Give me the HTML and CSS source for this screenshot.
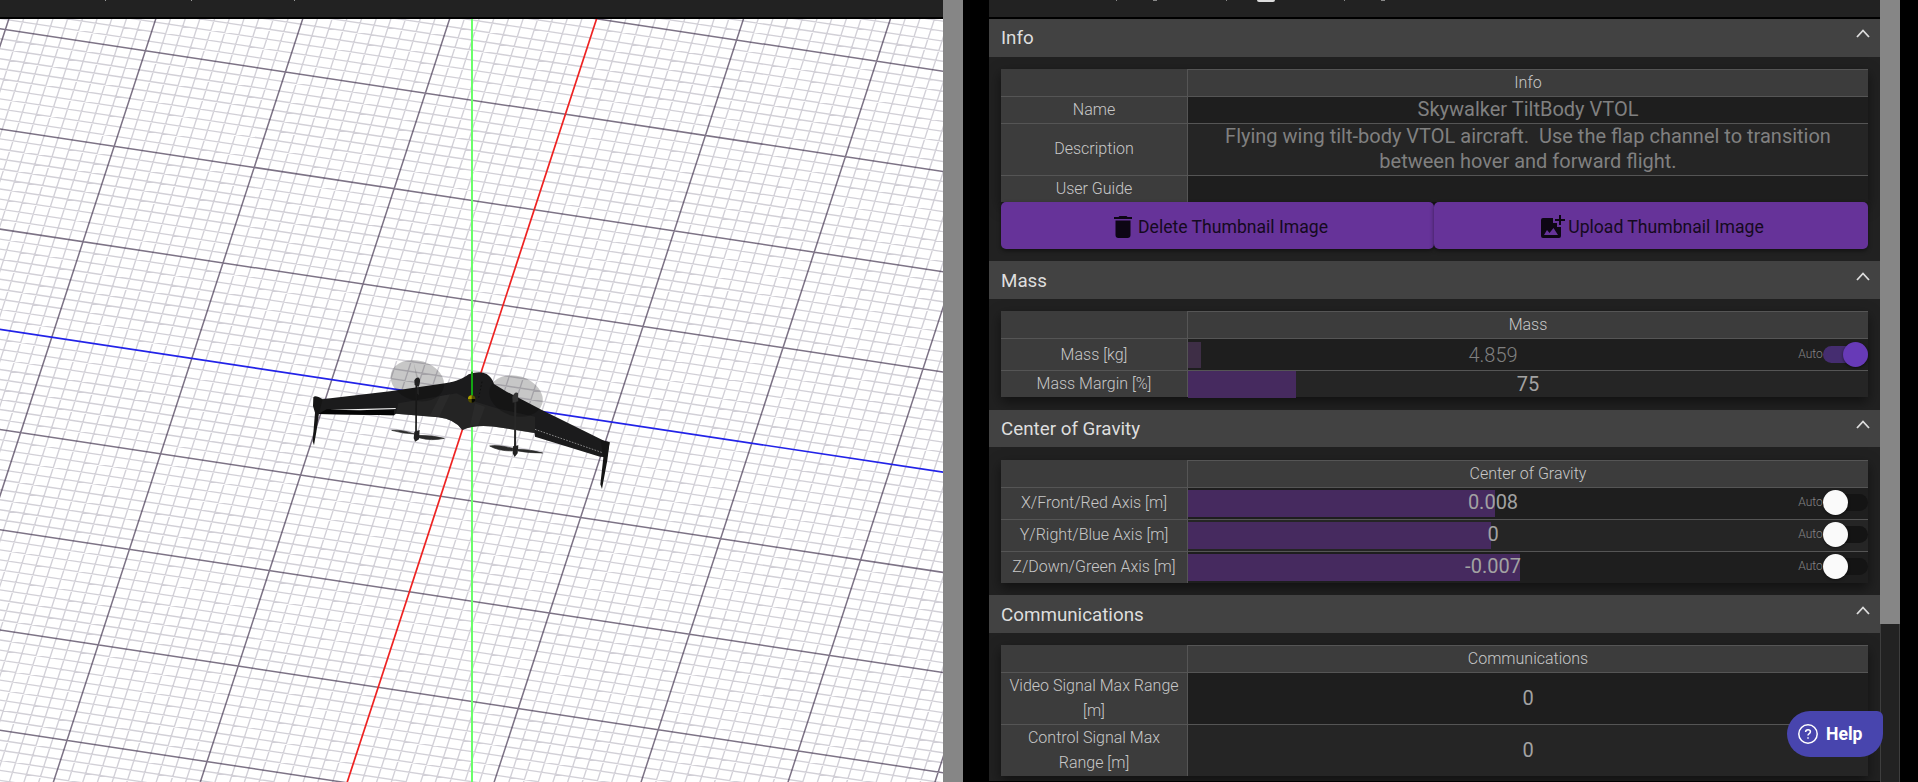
FILE: index.html
```html
<!DOCTYPE html>
<html lang="en">
<head>
<meta charset="utf-8">
<title>Vehicle Wizard</title>
<link rel="stylesheet" href="styles.css">
</head>
<body>
<main class="app">
  <section class="viewer">
    <div class="toolbar">
      <svg class="toolbar-edge" width="943" height="3"><path d="M105 0h1v1h-1zM191 0h1v1h-1zM294 0h1v1h-1z" fill="#999"/></svg>
    </div>
    <svg class="scene" width="943" height="763" viewBox="0 19 943 763">
      <rect y="19" width="943" height="763" fill="#fff"/>
      <path id="minor" class="grid-minor"/>
      <path id="major" class="grid-major"/>
      <path d="M-88.200 316L1031.800 485.600" stroke="#2222e8" stroke-width="1.700"/>
      <path d="M596.600 18.800L347 782.800" stroke="#ee2222" stroke-width="1.700"/>
      <path d="M472 18V783" stroke="#6bff6b" stroke-width="2"/>
      <g transform="translate(290 340) scale(.33333)">
        <path d="M83 179L300 154L465 130C500 125 520 115 536 103Q570 91 590 102Q606 112 612 132L650 155L760 212L942 302L959 307L951 352L930 350L735 290L734 279L640 264Q560 250 517 270Q495 238 445 232L318 221L312 226L85 222L75 200Z" fill="#1b1b1c"/>
        <path d="M325 190L500 160L540 180L620 205L735 230L735 280L640 264Q560 250 517 270Q495 238 445 232L318 221Z" fill="#2c2c2c" opacity=".55"/>
        <path d="M450 168L480 163L447 232L420 226ZM555 190L585 200L565 255L540 258Z" fill="#383838" opacity=".3"/>
        <path d="M85 222L110 208L312 211V226Z" fill="#050505"/>
        <path d="M120 209L317 204V207L210 211Z" fill="#f2f2f2"/>
        <path d="M735 268L940 339" stroke="#bbb" stroke-width="2" stroke-dasharray="5 4"/>
        <ellipse cx="382" cy="122" rx="82" ry="60" transform="rotate(17 382 122)" fill="#000" opacity=".22"/>
        <ellipse cx="678" cy="168" rx="82" ry="60" transform="rotate(17 678 168)" fill="#000" opacity=".22"/>
        <path d="M371 68L384 112L387 165L379 160L380 120Z" fill="#555" opacity=".25"/>
        <path d="M379 135L378 285" stroke="#171717" stroke-width="5"/>
        <path d="M676 180L675 330" stroke="#282828" stroke-width="6"/>
        <path d="M373 121Q378 110 387 113Q394 121 386 140L374 135Z" fill="#222"/>
        <path d="M667 171Q674 153 684 159L685 184L668 188Z" fill="#343434"/>
        <path d="M305 271Q335 268 374 282Q338 281 305 271ZM385 286Q430 286 463 295Q425 304 386 293ZM599 318Q620 313 669 325L668 333Q625 333 599 318ZM684 328Q720 328 758 339Q715 339 684 333Z" fill="#292929" stroke="#292929" stroke-width="2"/>
        <path d="M373 275L389 270L387 298L376 305L371 295ZM669 319L685 316L683 340L674 351L668 340Z" fill="#202020"/>
        <path d="M70 172Q76 164 98 178L87 220L79 276L72 316L68 304L75 218L69 198Z" fill="#151515"/>
        <path d="M932 300L959 307L952 361L936 447L931 433L940 353Z" fill="#151515"/>
        <path d="M546 95V178" stroke="#13a313" stroke-width="6"/>
        <path d="M576 125L565 178" stroke="#070707" stroke-width="2" stroke-dasharray="5 6"/>
        <circle cx="545" cy="177" r="11" fill="#504d00"/>
        <path d="M534 177A11 11 0 0 1 545 166V177Z" fill="#aaa000"/>
        <path d="M545 177H556A11 11 0 0 1 545 188Z" fill="#050505"/>
      </g>
    </svg>
  </section>
  <div class="scrollbar"></div>
  <div class="divider"></div>
  <section class="editor">
    <div class="toolbar">
      <svg class="toolbar-edge" width="891" height="3"><path d="M127 0h1v1h-1zM164 0h4v1h-4zM237 0h1v1h-1zM355 0h1v1h-1zM392 0h4v1h-4z" fill="#888"/><path d="M268 0h18q0 2-2 2h-14q-2 0-2-2z" fill="#ddd"/></svg>
    </div>

    <h2 class="bar">Info<svg class="chevron" viewBox="0 0 14 9"><path d="M1 8L7 1.500L13 8"/></svg></h2>
    <div class="panel panel-info">
      <div class="table">
        <div class="row head"><div class="label"></div><div class="cell">Info</div></div>
        <div class="row"><div class="label">Name</div><div class="cell muted">Skywalker TiltBody VTOL</div></div>
        <div class="row tall alt"><div class="label">Description</div><div class="cell muted">Flying wing tilt-body VTOL aircraft.&nbsp; Use the flap channel to transition<br>between hover and forward flight.</div></div>
        <div class="row last"><div class="label">User Guide</div><div class="cell"></div></div>
      </div>
      <div class="buttons">
        <button class="btn btn-delete"><svg width="18" height="24" viewBox="0 0 18 24"><path d="M5.500 1h7l1 1H18v2H0V2h4.500zM1.500 5.500h15V20q0 3-3 3h-9q-3 0-3-3z"/></svg>Delete Thumbnail Image</button>
        <button class="btn btn-upload"><svg width="24" height="24" viewBox="0 0 24 24"><path d="M18 0h2v4h4v2h-4v4h-2V6h-4V4h4zM2 3h10v5h4v4h4v9q0 2-2 2H2q-2 0-2-2V5q0-2 2-2zm1 17h14l-4.500-7-4 5-2.500-3z" fill-rule="evenodd"/></svg>Upload Thumbnail Image</button>
      </div>
    </div>

    <h2 class="bar low">Mass<svg class="chevron" viewBox="0 0 14 9"><path d="M1 8L7 1.500L13 8"/></svg></h2>
    <div class="panel panel-mass">
      <div class="table">
        <div class="row head"><div class="label"></div><div class="cell">Mass</div></div>
        <div class="row auto"><div class="label">Mass [kg]</div><div class="cell"><div class="slider disabled" style="--fill:13px">4.859</div><span class="hint">Auto</span><span class="switch on"><i></i></span></div></div>
        <div class="row last alt"><div class="label">Mass Margin [%]</div><div class="cell"><div class="slider" style="--fill:108px">75</div></div></div>
      </div>
    </div>

    <h2 class="bar bar-short">Center of Gravity<svg class="chevron" viewBox="0 0 14 9"><path d="M1 8L7 1.500L13 8"/></svg></h2>
    <div class="panel panel-cog">
      <div class="table">
        <div class="row head"><div class="label"></div><div class="cell">Center of Gravity</div></div>
        <div class="row auto"><div class="label">X/Front/Red Axis [m]</div><div class="cell"><div class="slider" style="--fill:307px">0.008</div><span class="hint">Auto</span><span class="switch"><i></i></span></div></div>
        <div class="row auto alt"><div class="label">Y/Right/Blue Axis [m]</div><div class="cell"><div class="slider" style="--fill:303px">0</div><span class="hint">Auto</span><span class="switch"><i></i></span></div></div>
        <div class="row auto last"><div class="label">Z/Down/Green Axis [m]</div><div class="cell"><div class="slider" style="--fill:332px">-0.007</div><span class="hint">Auto</span><span class="switch"><i></i></span></div></div>
      </div>
    </div>

    <h2 class="bar low">Communications<svg class="chevron" viewBox="0 0 14 9"><path d="M1 8L7 1.500L13 8"/></svg></h2>
    <div class="panel panel-comm">
      <div class="table">
        <div class="row head"><div class="label"></div><div class="cell">Communications</div></div>
        <div class="row tall"><div class="label">Video Signal Max Range<br>[m]</div><div class="cell"><div class="slider" style="--fill:0px">0</div></div></div>
        <div class="row tall last alt"><div class="label">Control Signal Max<br>Range [m]</div><div class="cell"><div class="slider" style="--fill:0px">0</div></div></div>
      </div>
    </div>
  </section>
  <div class="scrollbar track"><div class="thumb"></div></div>
</main>
<button class="help"><svg width="20" height="20" viewBox="0 0 20 20"><circle cx="10" cy="10" r="9.200"/><path d="M7.600 8Q7.600 5.700 10 5.700Q12.400 5.700 12.400 7.800Q12.400 9 11 9.800Q10 10.400 10 11.600"/><path d="M10 13.300V14.800"/></svg>Help</button>
<script src="grid.js"></script>
</body>
</html>
```
FILE: grid.js
```js
// Ground grid: each major cell is spanned by vectors u and v, split into ten minor cells.
const origin = [471.8, 400.8];
const u = [140, 21.2];
const v = [31.2, -95.5];

function segment(step, along, n) {
  const x = origin[0] + step[0] * n / 10;
  const y = origin[1] + step[1] * n / 10;
  const p = (k) => `${(x + along[0] * k).toFixed(2)} ${(y + along[1] * k).toFixed(2)}`;
  return `M${p(-6)}L${p(6)}`;
}

let minor = '';
let major = '';
for (let n = -60; n <= 60; n++) {
  const lines = segment(u, v, n) + segment(v, u, n);
  if (n % 10) minor += lines;
  else if (n) major += lines;
}
document.getElementById('minor').setAttribute('d', minor);
document.getElementById('major').setAttribute('d', major);
```
FILE: styles.css
```css
* { box-sizing: border-box; }
body { margin: 0; background: #000; font-family: Roboto, sans-serif; overflow: hidden; }
.app { display: flex; width: 1918px; height: 782px; overflow: hidden; }
.viewer { width: 943px; flex: none; }
.toolbar { height: 19px; background: #222; border-bottom: 2px solid #000; }
.toolbar-edge { display: block; }
.scene { display: block; }
.grid-minor { stroke: #32284a; stroke-opacity: .22; stroke-width: 1.35; fill: none; }
.grid-major { stroke: #3a2a48; stroke-opacity: .66; stroke-width: 1.5; fill: none; }
.scrollbar { width: 20px; flex: none; background: #868686; }
.track { background: #222; border: solid #3e3e3e; border-width: 0 1px; }
.thumb { height: 624px; margin: 0 -1px; background: #868686; }
.divider { width: 26px; flex: none; }
.editor { width: 891px; height: 781px; overflow: hidden; flex: none; background: #212121; }

.bar { position: relative; display: flex; justify-content: space-between; height: 38px; margin: 0; padding: 0 10px 0 12px; background: #424242; color: #dedede; font-size: 18.8px; font-weight: 400; line-height: 39px; }
.bar-short { height: 37px; }
.low { line-height: 40px; }
.chevron { width: 14px; height: 9px; margin-top: 10px; fill: none; stroke: #ddd; stroke-width: 1.8; }
.low .chevron { margin-top: 11px; }
.panel { padding: 12px 12px 0; }
.panel-info { height: 204px; }
.panel-mass { height: 111px; }
.panel-cog { height: 148px; padding-top: 13px; }
.panel-comm { height: 160px; }

.table { box-shadow: 0 5px 12px rgba(0, 0, 0, .5); }
.row { display: grid; grid-template: 100% / 186px 1fr; height: 27px; border-bottom: 1px solid #555; background: #1e1e1e; }
.alt { background: #252525; }
.head { height: 28px; background: #3c3c3c; }
.tall { height: 52px; }
.auto { height: 32px; }
.last { height: 26px; border-bottom: 0; }
.tall.last { height: 51px; }
.auto.last { height: 31px; }
.label { display: flex; align-items: center; justify-content: center; padding-bottom: 2px; background: #3c3c3c; color: #c8c8c8; font-size: 16px; font-weight: 300; line-height: 25px; text-align: center; }
.auto .label { padding-bottom: 1px; }
.cell { display: flex; align-items: center; justify-content: center; border-left: 1px solid #555; color: #a0a0a0; font-size: 20px; line-height: 25px; text-align: center; }
.head .cell { padding-bottom: 2px; border-top: 1px solid #555; color: #c8c8c8; font-size: 16px; font-weight: 300; }
.cell.muted { padding-bottom: 2px; color: #808080; }
.tall .cell { padding-bottom: 1px; }
.slider { flex: 1; height: 27px; line-height: 26px; color: #a2a2a2; background: linear-gradient(#462a5f, #462a5f) 0 0 / var(--fill) 100% no-repeat; }
.disabled { height: 26px; font-weight: 300; color: #808080; background-image: linear-gradient(#3e2e46, #3e2e46); }
.panel-cog .auto .cell { padding-bottom: 2px; }
.panel-cog .auto .label { padding-bottom: 3px; }
.panel-cog .slider { margin-bottom: -2px; line-height: 25px; }
.hint { width: 25px; color: #858585; font-size: 12px; font-weight: 300; }
.switch { display: flex; align-items: center; width: 45px; height: 17px; border-radius: 9px; background: #141414; }
.switch i { width: 25px; height: 25px; border-radius: 50%; background: #fafafa; box-shadow: 0 1px 3px rgba(0, 0, 0, .5); }
.on { background: #452d70; justify-content: flex-end; }
.on i { background: #673ab7; }

.buttons { position: relative; display: grid; grid-template-columns: 433px 434px; }
.btn { display: flex; align-items: center; justify-content: center; gap: 6px; height: 47px; padding: 3px 0 0 7px; border: 0; border-radius: 5px; background: #663399; color: #150a20; font: 400 17.6px/44px Roboto, sans-serif; box-shadow: 0 2px 4px rgba(0, 0, 0, .45); }
.btn svg { fill: #0d0614; }
.btn-upload { gap: 3px; padding-left: 3px; }

.help { position: absolute; left: 1787px; top: 711px; display: flex; align-items: center; gap: 8px; width: 96px; height: 46px; padding: 0 0 0 11px; border: 0; border-radius: 23px 6px 23px 23px; background: #4845ae; color: #fff; font: 700 17.6px Roboto, sans-serif; }
.help svg { fill: none; stroke: #fff; stroke-width: 1.5; }
```
